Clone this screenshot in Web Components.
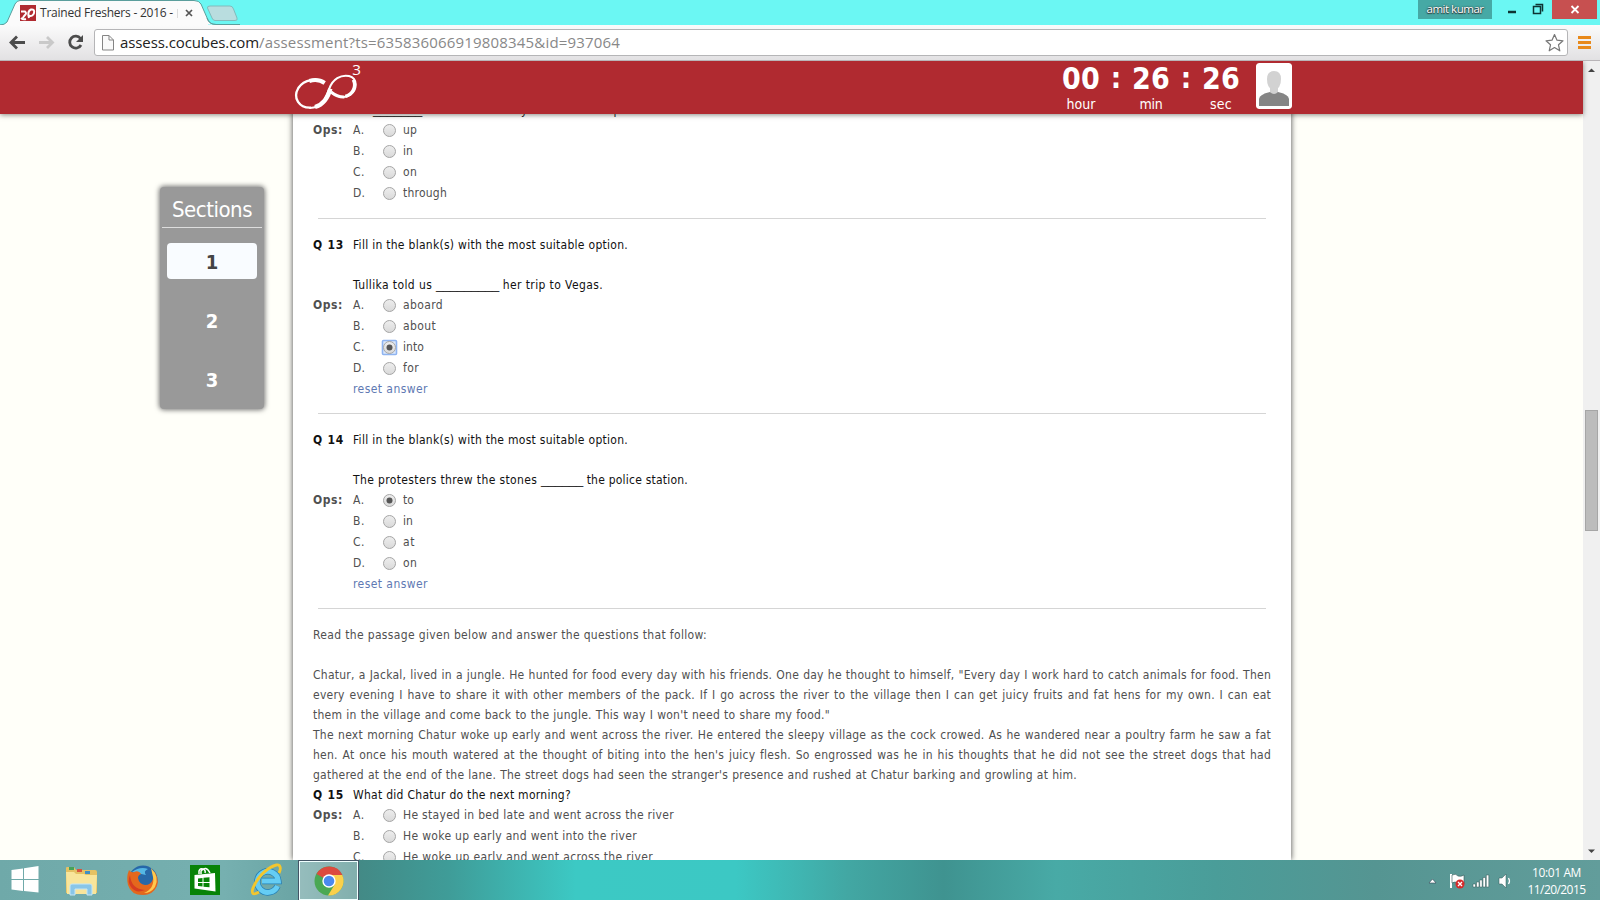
<!DOCTYPE html>
<html lang="en">
<head>
<meta charset="utf-8">
<title>Trained Freshers - 2016</title>
<style>
html,body{margin:0;height:100%;overflow:hidden;background:#fffff9}
body{font-family:"DejaVu Sans Condensed","DejaVu Sans",sans-serif}
</style>
</head>
<body>
<desktop-screen></desktop-screen>
<script>
const define=(name,css,html,setup)=>customElements.define(name,class extends HTMLElement{
  connectedCallback(){
    if(this.shadowRoot)return;
    const r=this.attachShadow({mode:'open'});
    r.innerHTML=`<style>*{box-sizing:border-box}:host{box-sizing:border-box}${css}</style>`+(typeof html==='function'?html(this):html);
    if(setup)setup(this,r);
  }
});

/* Text run tracked to an exact width */
define('fit-text',`:host{display:inline-block;white-space:pre;flex:none;letter-spacing:0}`,`<slot></slot>`,el=>{
  const target=+el.getAttribute('w');
  const n=el.textContent.length;
  const w=el.getBoundingClientRect().width;
  if(w&&n){el.style.letterSpacing=((target-w)/n).toFixed(4)+'px';}
});

define('browser-tabs',`
:host{display:flex;height:25px;background:#6bf7f3;font-family:"Open Sans",sans-serif;overflow:hidden}
.strip{flex:none;width:240px;height:25px;display:grid}
.strip>*{grid-area:1/1}
.label{display:flex;align-items:flex-start;padding:4px 0 0 40px;font-size:12px;line-height:18px;color:#333}
.gap{flex:1}
.user{margin-top:0;width:74px;height:19px;background:#46a9a5;color:#fff;font-size:11.5px;line-height:18px;text-align:center;text-shadow:0 0 2px #222,0 1px 1px #333;display:flex;justify-content:center}
.ctl{display:block;flex:none}
`,`
<div class="strip">
<svg width="240" height="25"><path d="M-1 25Q5 25 7 22L15 4Q17 .5 20 .5H194Q199 .5 201 4L208 20Q210 24.500 216 24.500H240V26H-1Z" fill="#fbfbfb" stroke="#5b9e9c"/><path d="M208 24.500H240V27H208Z" fill="#6bf7f3"/><path d="M207 18Q209 24.500 216 24.500H240" fill="none" stroke="#5b9e9c"/>
<path d="M210 6H230Q232.500 6 233.500 9L237 18Q238 20.500 235 20.500H215Q213 20.500 212 18L207.500 8Q207 6 210 6Z" fill="#b9dddf" stroke="#83babb"/>
<rect x="20" y="5" width="16" height="16" fill="#b02a30"/><path d="M21 11.500H25Q27 13 25 15T23 18M29 18Q27 11 31 9.500Q35 9 34 13T28 15.500M26 19Q23 20 21 18" fill="none" stroke="#fff" stroke-width="2"/>
<path d="M177.500 9V18" stroke="#ddd"/><path d="M186 10L192 16M192 10L186 16" stroke="#555" stroke-width="1.700"/></svg>
<div class="label"><fit-text w="133">Trained Freshers - 2016 -</fit-text></div>
</div>
<div class="gap"></div><div class="user"><fit-text w="57">amit kumar</fit-text></div>
<svg class="ctl" width="108" height="25"><path d="M16 12H24" stroke="#0d3433" stroke-width="2.500"/><path d="M41.500 6.500H48.500V13.500H41.500ZM43.500 4.500H50.500V11.500" fill="none" stroke="#0d3433" stroke-width="1.500"/><rect x="60" width="45" height="19" fill="#c75050"/><path d="M79.500 6L86.500 13M86.500 6L79.500 13" stroke="#fff" stroke-width="1.800"/></svg>`);

define('browser-toolbar',`
:host{display:flex;height:36px;align-items:flex-start;background:linear-gradient(#fbfbfb,#e2e1e3);border-bottom:1px solid #b9b5b8;font-family:"Open Sans",sans-serif}
svg{flex:none;display:block}
.omni{flex:1;height:27px;margin-top:4px;border:1px solid #b5b5b7;border-radius:3px;background:#fff;display:flex;align-items:flex-start;font-size:15px;line-height:25px;color:#888}
.omni .host{color:#222}
.fill{flex:1}
`,`
<svg width="94" height="35"><path d="M11 17.500H25M17 11.500L11 17.500L17 23.500" fill="none" stroke="#4c4c4c" stroke-width="2.800"/><path d="M39 17.500H52M47 12L52.500 17.500L47 23" fill="none" stroke="#c9c9c9" stroke-width="2.800"/><path d="M80.500 13.500A6 6 0 1 0 81 20" fill="none" stroke="#4c4c4c" stroke-width="2.800"/><path d="M83 10V17H76Z" fill="#4c4c4c"/></svg>
<div class="omni"><svg width="25" height="25"><path d="M7.500 5.500H14L18.500 10V20H7.500ZM14 5.500V10H18.500" fill="#fafafa" stroke="#858585"/></svg><fit-text w="139" class="host">assess.cocubes.com</fit-text><fit-text w="361">/assessment?ts=635836066919808345&amp;id=937064</fit-text><span class="fill"></span>
<svg width="25" height="25"><path d="M12.500 4.500L15 10.200L21 10.800L16.500 14.800L17.800 20.800L12.500 17.600L7.200 20.800L8.500 14.800L4 10.800L10 10.200Z" fill="#fff" stroke="#777" stroke-width="1.200" stroke-linejoin="round"/></svg></div>
<svg width="32" height="35"><path d="M10 12.500H23M10 17.500H23M10 22.500H23" stroke="#e8891a" stroke-width="2.800"/></svg>`);

define('count-unit',`
:host{display:flex;flex-direction:column;align-items:center;width:38px;flex:none;color:#fff}
.n{font-weight:bold;font-size:30px;line-height:36px;height:34px}
.l{font-size:14px;line-height:18px}
`,el=>`<div class="n"><fit-text w="38">${el.getAttribute('n')}</fit-text></div><div class="l"><fit-text w="${el.getAttribute('lw')}">${el.getAttribute('label')}</fit-text></div>`);

define('exam-header',`
:host{display:flex;height:53px;background:#b02a30;box-shadow:0 1px 5px rgba(60,60,50,.6);position:relative;z-index:2;color:#fff;padding-left:293px;align-items:flex-start}
.logo{display:block;flex:none;margin-top:2px;overflow:visible}
.gap{width:699px}
.colon{width:32px;text-align:center;font-weight:bold;font-size:29px;line-height:35px;flex:none}
.pic{display:block;margin:2px 0 0 16px;border-radius:3px;flex:none}
`,`
<svg class="logo" width="70" height="49" viewBox="39 24 210 147"><g fill="none" stroke="#fff" stroke-linecap="butt"><path d="M134 82C112 69 73 71 55 99C37 130 58 160 93 158" stroke-width="7"/><path d="M134 84C121 75 105 73 88 78" stroke-width="12"/><path d="M88 159C126 160 137 130 147 103C157 72 183 58 207 63C234 70 232 104 211 120C190 133 168 123 152 111" stroke-width="6"/><path d="M105 156C134 147 146 121 151 101" stroke-width="13"/><path d="M220 74C231 96 217 118 196 124" stroke-width="10"/><path d="M193 126C174 127 163 119 153 111" stroke-width="9"/></g><text x="217" y="59" font-family="Open Sans,sans-serif" font-size="46" fill="#fff">3</text></svg>
<div class="gap"></div>
<count-unit n="00" label="hour" lw="29"></count-unit><div class="colon">:</div><count-unit n="26" label="min" lw="23"></count-unit><div class="colon">:</div><count-unit n="26" label="sec" lw="22"></count-unit>
<svg class="pic" width="36" height="46"><rect width="36" height="46" rx="3" fill="#fff"/><path d="M3 43V36C4 32 9 30 14 29H22C27 30 32 32 33 36V43Z" fill="#858585"/><path d="M14 23H22V29Q18 33 14 29Z" fill="#d2d2d2"/><path d="M11 16Q11 8 18 8T25 16Q25 26 18 27Q11 26 11 16Z" fill="#d2d2d2"/></svg>`);

define('section-nav',`
:host{display:flex;flex-direction:column;align-items:center;width:104px;height:222px;background:#999;border-radius:4px;box-shadow:0 0 5px 1px #777;color:#fff}
.h{width:100px;height:41px;border-bottom:1px solid #ddd;font-size:22px;line-height:45px;text-align:center}
.b{width:90px;height:36px;border-radius:4px;margin-top:15px;font-weight:bold;font-size:20px;line-height:38px;text-align:center}
.b+.b{margin-top:23px}
.on{background:#f9fcff;color:#444}
`,`<div class="h"><fit-text w="80">Sections</fit-text></div><div class="b on">1</div><div class="b">2</div><div class="b">3</div>`);

define('radio-mark',`
:host{display:block;width:13px;height:13px;flex:none}
svg{display:block;overflow:visible}
`,el=>`<svg width="13" height="13"><defs><linearGradient id="g" x2="0" y2="1"><stop stop-color="#eee"/><stop offset="1" stop-color="#d9d9d9"/></linearGradient></defs>${el.hasAttribute('focused')?'<rect x="-.5" y="-.5" width="14" height="14" rx="1" fill="#dbe8fb" stroke="#8fb4f0" stroke-width="1.600"/>':''}<circle cx="6.500" cy="6.500" r="6" fill="url(#g)" stroke="#a6a6a6"/>${el.hasAttribute('checked')?'<circle cx="6.500" cy="6.500" r="3" fill="#555"/>':''}</svg>`);

define('answer-row',`
:host{display:flex;height:21px;line-height:20px;font-size:12px;color:#505050}
.o{width:40px;font-weight:bold}.k{width:30px}
radio-mark{margin:4px 7px 0 0}
`,el=>`<div class="o">${el.getAttribute('k')==='A'?'<fit-text w="30">Ops:</fit-text>':''}</div><div class="k"><fit-text w="12">${el.getAttribute('k')}.</fit-text></div><radio-mark ${el.hasAttribute('checked')?'checked':''} ${el.hasAttribute('focused')?'focused':''}></radio-mark><fit-text w="${el.getAttribute('w')}">${el.textContent}</fit-text>`);

define('question-item',`
:host{display:block;font-size:12px;line-height:20px;color:#111}
.q{display:flex;height:20px}.n{width:40px;font-weight:bold}
.reset{height:20px;padding-left:40px;color:#6079b3;display:flex}
`,el=>`${el.hasAttribute('n')?`<div class="q"><div class="n"><fit-text w="31">Q ${el.getAttribute('n')}</fit-text></div><fit-text w="${el.getAttribute('tw')}">${el.getAttribute('text')}</fit-text></div>`:''}<slot name="stem"></slot><slot></slot>${el.hasAttribute('reset')?'<div class="reset"><fit-text w="75">reset answer</fit-text></div>':''}`);

define('stem-line',`:host{display:flex;height:40px;padding:20px 0 0 40px}.u{font-family:"Liberation Sans",sans-serif;font-size:13px}`,
el=>`<fit-text w="${el.getAttribute('aw')}">${el.getAttribute('a')}</fit-text><fit-text class="u" w="${el.getAttribute('uw')}">${el.getAttribute('u')}</fit-text><fit-text w="${el.getAttribute('bw')}">${el.getAttribute('b')}</fit-text>`);

define('rule-line',`:host{display:block;height:1px;background:#d5d5d5;margin:14px 5px 16px 5px}`,'');

define('clipped-line',`:host{display:flex;height:20px;font-size:12px;line-height:20px;color:#111;padding-left:60px}.u{font-family:"Liberation Sans",sans-serif;font-size:13px}.y{margin-left:99px}.p{margin-left:86px}`,
`<fit-text class="u" w="49">_______</fit-text><span class="y">y</span><span class="p">p</span>`);

define('passage-text',`
:host{display:block;font-size:12px;line-height:20px;color:#505050}
div{height:20px;display:flex}
`,`<div><fit-text w="394">Read the passage given below and answer the questions that follow:</fit-text></div><div></div>`+[
['Chatur, a Jackal, lived in a jungle. He hunted for food every day with his friends. One day he thought to himself, "Every day I work hard to catch animals for food. Then',958],
['every evening I have to share it with other members of the pack. If I go across the river to the village then I can get juicy fruits and fat hens for my own. I can eat',958],
['them in the village and come back to the jungle. This way I won\'t need to share my food."',517],
['The next morning Chatur woke up early and went across the river. He entered the sleepy village as the cock crowed. As he wandered near a poultry farm he saw a fat',958],
['hen. At once his mouth watered at the thought of biting into the hen\'s juicy flesh. So engrossed was he in his thoughts that he did not see the street dogs that had',958],
['gathered at the end of the lane. The street dogs had seen the stranger\'s presence and rushed at Chatur barking and growling at him.',764]
].map(([t,w])=>`<div><passage-line w="${w}">${t}</passage-line></div>`).join(''));

/* One justified line: slack goes to the word spaces */
define('passage-line',`:host{display:block;white-space:nowrap;letter-spacing:.25px}`,`<slot></slot>`,el=>{
  el.style.width='max-content';
  const words=el.textContent.split(' ').length-1;
  const gap=(+el.getAttribute('w')-el.getBoundingClientRect().width)/words;
  el.style.wordSpacing=gap.toFixed(4)+'px';
});

define('exam-paper',`
:host{display:block;width:998px;height:799px;background:#fff;box-shadow:0 0 6px #444;padding:39px 20px 0;overflow:hidden;margin-top:-53px}
`,`
<clipped-line></clipped-line>
<question-item><answer-row k="A" w="14">up</answer-row><answer-row k="B" w="10">in</answer-row><answer-row k="C" w="14">on</answer-row><answer-row k="D" w="44">through</answer-row></question-item>
<rule-line></rule-line>
<question-item n="13" tw="275" text="Fill in the blank(s) with the most suitable option." reset>
<stem-line slot="stem" a="Tullika told us " aw="83" u="_________" uw="63" b=" her trip to Vegas." bw="104"></stem-line>
<answer-row k="A" w="40">aboard</answer-row><answer-row k="B" w="33">about</answer-row><answer-row k="C" w="21" checked focused>into</answer-row><answer-row k="D" w="16">for</answer-row></question-item>
<rule-line></rule-line>
<question-item n="14" tw="275" text="Fill in the blank(s) with the most suitable option." reset>
<stem-line slot="stem" a="The protesters threw the stones " aw="188" u="______" uw="42" b=" the police station." bw="105"></stem-line>
<answer-row k="A" w="11" checked>to</answer-row><answer-row k="B" w="10">in</answer-row><answer-row k="C" w="12">at</answer-row><answer-row k="D" w="14">on</answer-row></question-item>
<rule-line></rule-line>
<passage-text></passage-text>
<question-item n="15" tw="218" text="What did Chatur do the next morning?"><answer-row k="A" w="271">He stayed in bed late and went across the river</answer-row><answer-row k="B" w="234">He woke up early and went into the river</answer-row><answer-row k="C" w="250">He woke up early and went across the river</answer-row></question-item>`);

define('scroll-bar',`
:host{display:flex;flex-direction:column;width:17px;background:#f0f0f0;align-items:center}
svg{display:block}
.thumb{width:13px;height:121px;background:#bcbcbc;border:1px solid #a6a6a6;margin-top:332px}
.sp{flex:1}
`,`<svg width="17" height="17"><path d="M5 11L8.500 7.500L12 11Z" fill="#444"/></svg><div class="thumb"></div><div class="sp"></div><svg width="17" height="17"><path d="M5 6.500L8.500 10L12 6.500Z" fill="#444"/></svg>`);

define('task-bar',`
:host{display:flex;height:40px;background:linear-gradient(90deg,#6fa9a9 0,#76b0b0 14%,#6ba5a5 18.500%,#438a86 22.500%,#3f9c98 28%,#3cc9c4 36%,#3cc8c4 46%,#42a7a3 53%,#3f9390 59%,#48aaa6 66%,#4a9d99 76%,#559592 86%,#629d9b 100%);position:relative;z-index:3;font-family:"Open Sans",sans-serif}
svg{display:block;flex:none}
.active{width:59px;height:39px;margin-top:1px;border:1px solid #f0ffff;background:rgba(205,220,220,.45);outline:1px solid #456}
.gap{flex:1}
.clock{width:77px;color:#fff;font-size:12px;line-height:17px;padding-top:4px;display:flex;flex-direction:column;align-items:center;margin-right:5px}
`,`
<svg width="50" height="40"><path d="M11.500 10L23 8.500V19H11.500ZM24 8.300L38.500 6V19H24ZM11.500 20H23V31L11.500 29.500ZM24 20H38.500V32.500L24 31Z" fill="#fff"/></svg>
<svg width="62" height="40"><path d="M16 8Q16 7 17 7H24L26 10H45Q47 10 47 12V33H16Z" fill="#e5c263"/><rect x="19" y="7" width="5" height="3" fill="#46a35a"/><rect x="27" y="9" width="5" height="3" fill="#d9533d"/><rect x="35" y="11" width="5" height="3" fill="#3e8fc4"/><path d="M16 12H24L26 14H34L36 15H47L46 34H17Z" fill="#f8e59b"/><path d="M20 35V26Q20 24 22 24H40Q42 24 42 26V35H37V29H25V35Z" fill="#89c6e8" stroke="#c4e6f5"/></svg>
<svg width="62" height="40"><circle cx="31" cy="20" r="14.500" fill="#2768a8"/><path d="M20 12Q28 6 36 9Q31 11 34 15" fill="#55b7e4"/><path d="M17 10Q19 13 22 12Q27 10 29 14Q26 15 26 18Q27 24 33 25Q39 25 41 19Q44 13 40 9Q48 17 45 26Q41 35 31 35Q19 35 16 25Q14 17 17 10Z" fill="#e4681d"/><path d="M39 8Q48 17 43 27Q39 33 32 33Q43 28 41 17Z" fill="#ffc94d"/><path d="M18 15Q19 29 33 30Q24 34 19 27Q15 22 18 15Z" fill="#d63d22"/></svg>
<svg width="62" height="40"><rect x="16" y="5" width="30" height="30" fill="#078307"/><path d="M20.500 15L41 13L41.500 31.500L20.500 28.500Z" fill="#fff"/><path d="M25 14V11Q26 8 29 9T31 13M27 14V11Q32 5 36 13" fill="none" stroke="#fff" stroke-width="1.500"/><path d="M24 18.500L28.500 18V22H24ZM29.500 17.800L35.500 17.200V22H29.500ZM24 23H28.500V26.500L24 26ZM29.500 23H35.500V27.300L29.500 26.800Z" fill="#078307"/></svg>
<svg width="63" height="40"><path d="M41.500 26A10.500 10.500 0 1 1 42.300 21H26" fill="none" stroke="#257fb5" stroke-width="6.500"/><path d="M41.500 26A10.500 10.500 0 1 1 42.300 21H26" fill="none" stroke="#65cdf4" stroke-width="5"/><path d="M23 32Q14 37 17 28Q22 16 32 9Q43 2 44 7Q45 9 43 13" fill="none" stroke="#f3c62d" stroke-width="2.800"/></svg>
<div class="active"><svg width="57" height="37"><circle cx="29" cy="19" r="14.500" fill="#4aa853"/><path d="M29 19L16.500 12A14.500 14.500 0 0 1 42.500 13H29Z" fill="#dc4a3e"/><path d="M29 13H42.300A14.500 14.500 0 0 1 28 33.500L35 22Z" fill="#fbd04b"/><circle cx="29" cy="19" r="6.700" fill="#fff"/><circle cx="29" cy="19" r="5.300" fill="#4b89ee"/></svg></div>
<div class="gap"></div>
<svg width="95" height="40"><path d="M6 23L9.500 19L13 23Z" fill="#fff" stroke="#345" stroke-width=".6"/><path d="M28 14V28" stroke="#fff" stroke-width="2"/><path d="M29 15Q33 13 35 16Q38 17 41 15V24Q37 25 35 23Q32 21 29 23Z" fill="#fff" stroke="#355" stroke-width=".6"/><circle cx="37" cy="24" r="4.500" fill="#d52b2b"/><path d="M35 22L39 26M39 22L35 26" stroke="#fff" stroke-width="1.300"/><g fill="#fff" stroke="#355" stroke-width=".5"><path d="M50 24H52.500V27H50ZM53.500 22H56V27H53.500ZM56.700 20H59.200V27H56.700ZM60 17.500H62.500V27H60ZM63.300 15H65.800V27H63.300Z"/><path d="M76 18H79L83 14V28L79 24H76Z"/></g><path d="M85.500 18Q87.500 21 85.500 24" fill="none" stroke="#fff" stroke-width="1.300"/></svg>
<div class="clock"><fit-text w="49">10:01 AM</fit-text><fit-text w="58">11/20/2015</fit-text></div>`);

define('exam-page',`
:host{display:flex;height:799px;flex:none;overflow:hidden}
.main{flex:1;display:flex;flex-direction:column;min-width:0}
.body{display:flex;height:746px}
section-nav{margin:73px 29px 0 160px;flex:none}
exam-paper{flex:none}
`,`<div class="main"><exam-header></exam-header><div class="body"><section-nav></section-nav><exam-paper></exam-paper></div></div><scroll-bar></scroll-bar>`);

define('desktop-screen',`:host{display:flex;flex-direction:column;width:1600px;height:900px;overflow:hidden;background:#fffff9}`,
`<browser-tabs></browser-tabs><browser-toolbar></browser-toolbar><exam-page></exam-page><task-bar></task-bar>`);
</script>
</body>
</html>
